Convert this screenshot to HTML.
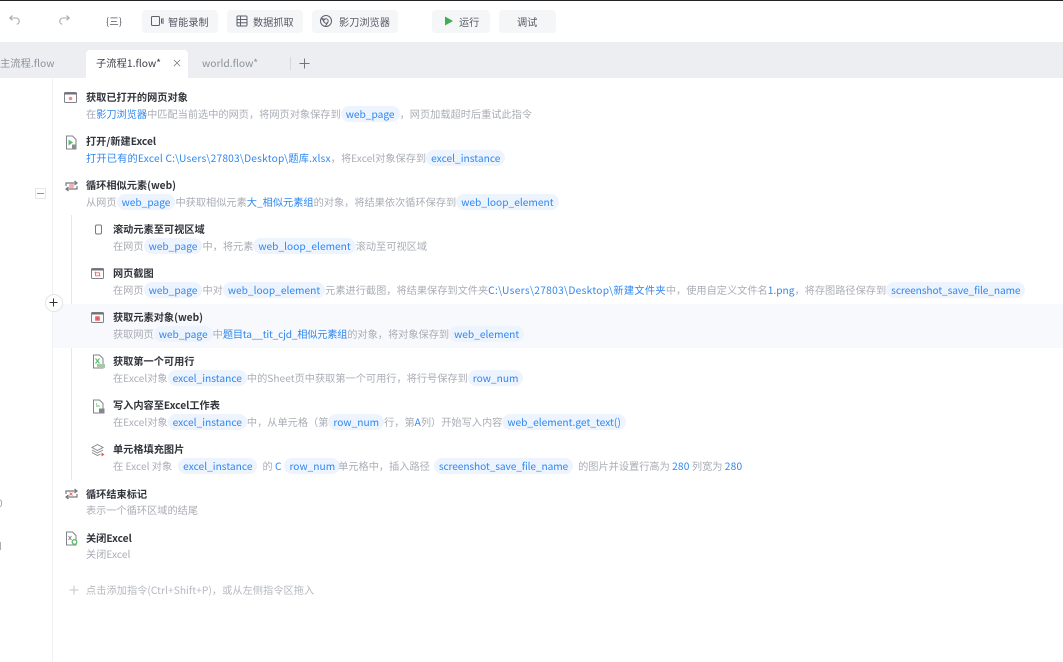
<!DOCTYPE html>
<html lang="zh"><head><meta charset="utf-8"><style>
html,body{margin:0;padding:0;background:#fff}
body{width:1063px;height:662px;overflow:hidden;position:relative;font-family:"Noto Sans CJK SC","Liberation Sans",sans-serif;color:#a9adb6;filter:blur(.3px)}
.abs{position:absolute}
.topline{left:0;top:0;width:1063px;height:1px;background:#222}
.toolbar{left:0;top:1px;width:1063px;height:41px;background:#fff}
.btn{position:absolute;top:9px;height:23px;background:#f5f6f8;border-radius:4px;font-size:10.2px;line-height:23px;color:#555a64;white-space:nowrap}
.btn span{position:absolute;top:0}
.btn svg{position:absolute;top:4px}
.tabbar{left:0;top:42px;width:1063px;height:36px;background:#eceef2}
.tab{position:absolute;top:8px;height:28px;line-height:26px;font-size:10.3px;white-space:nowrap;color:#8d929c}
.active{left:86px;width:102px;background:#fff;border-radius:4px 4px 0 0;color:#3c4048}
.t{position:absolute;font-size:10.2px;line-height:16px;font-weight:700;color:#30343b;white-space:nowrap}
.d{position:absolute;font-size:10.2px;line-height:16px;color:#a9adb6;white-space:nowrap;height:16px}
.d b{font-weight:400;color:#2f87f0}
.d b.l{letter-spacing:.2px}
.d i{font-style:normal;display:inline-block;background:#edf4fe;color:#2f87f0;border-radius:8px;padding:0 5px;line-height:16px;height:16px;font-size:10.2px;vertical-align:top}
.d i.s{letter-spacing:-.12px}
.i{position:absolute}
</style></head><body>
<div class="abs topline"></div>
<div class="abs toolbar">
<svg class="abs" style="left:8px;top:12px" width="14" height="14" viewBox="0 0 14 14" fill="none" stroke="#a3a8b0" stroke-width="1.100"><path d="M4.500 2.500 1.800 5 4.500 7.300M2 5h6a3.200 3.200 0 0 1 .8 6.300"/></svg>
<svg class="abs" style="left:57px;top:12px" width="14" height="14" viewBox="0 0 14 14" fill="none" stroke="#a3a8b0" stroke-width="1.100"><path d="M9.500 2.500 12.200 5 9.500 7.300M12 5H6a3.200 3.200 0 0 0-.8 6.300"/></svg>
<div class="abs" style="left:106px;top:12px;font-size:9.500px;line-height:16px;color:#555a64;white-space:nowrap">{三}</div>
<div class="btn" style="left:142px;width:76px"><svg style="left:8px" width="14" height="14" viewBox="0 0 14 14" fill="none" stroke="#5c616b" stroke-width="1"><rect x="1.500" y="2.500" width="8" height="9" rx="1"/><path d="M11.500 4.500v5M13 4v6"/></svg><span style="left:26px">智能录制</span></div>
<div class="btn" style="left:227px;width:76px"><svg style="left:8px" width="14" height="14" viewBox="0 0 14 14" fill="none" stroke="#5c616b" stroke-width="1"><rect x="2" y="2" width="10" height="10" rx="1"/><path d="M2 5.500h10M2 8.800h10M5.500 2v10"/></svg><span style="left:26px">数据抓取</span></div>
<div class="btn" style="left:312px;width:86px"><svg style="left:7px" width="14" height="14" viewBox="0 0 14 14" fill="none" stroke="#5c616b" stroke-width="1"><circle cx="7" cy="7" r="5.500"/><circle cx="7" cy="7" r="2.200"/><path d="M2 5h5M9 8l-2.500 4M5 8 3 4"/></svg><span style="left:27px">影刀浏览器</span></div>
<div class="btn" style="left:432px;width:58px"><svg style="left:10px" width="14" height="14" viewBox="0 0 14 14"><path d="M3 2.500 11 7 3 11.500Z" fill="#3fae4f"/></svg><span style="left:27px">运行</span></div>
<div class="btn" style="left:499px;width:57px"><span style="left:18px">调试</span></div>
</div>
<div class="abs tabbar">
<div class="tab" style="left:0">主流程.flow</div>
<div class="tab active"><span style="position:absolute;left:10px">子流程1.flow*</span><svg style="position:absolute;left:87px;top:9px" width="8" height="8" viewBox="0 0 9 9" stroke="#777" stroke-width=".9"><path d="M1 1l7 7M8 1 1 8"/></svg></div>
<div class="tab" style="left:202px">world.flow*</div>
<div class="abs" style="left:290px;top:15px;width:1px;height:13px;background:#d5d7dc"></div>
<svg class="abs" style="left:298px;top:15px" width="13" height="13" viewBox="0 0 13 13" stroke="#71767f" stroke-width="1"><path d="M6.500 1.500v10M1.500 6.500h10"/></svg>
</div>

<div class="abs" style="left:52px;top:78px;width:1px;height:584px;background:#f0f1f4"></div>
<div class="abs" style="left:71px;top:215px;width:1px;height:265px;background:#e6e8ec"></div>
<div class="abs" style="left:53px;top:304px;width:1010px;height:44px;background:#f7f9fc"></div>
<div class="abs" style="left:35px;top:188px;width:9px;height:9px;border:1px solid #e4e5e9;border-radius:1px"></div>
<div class="abs" style="left:37px;top:193px;width:7px;height:1px;background:#8f939b"></div>
<div class="abs" style="left:45px;top:294px;width:16px;height:16px;border:1px solid #e3e4e8;border-radius:50%;background:#fff"></div>
<svg class="abs" style="left:48px;top:297px" width="11" height="11" viewBox="0 0 11 11" stroke="#333" stroke-width="1"><path d="M5.500 1.500v8M1.500 5.500h8"/></svg>
<div class="abs" style="left:-3px;top:496px;font-size:10px;line-height:14px;color:#9a9ea6">0</div>
<div class="abs" style="left:0;top:542px;width:1px;height:8px;background:#a9adb6"></div>

<svg class="i" style="left:64px;top:91px" width="14" height="13" viewBox="0 0 14 13" fill="none"><rect x=".5" y="1.500" width="12" height="10" rx="1" stroke="#808389"/><rect x=".5" y="1.500" width="12" height="2" fill="#707379"/><circle cx="6.500" cy="7.500" r="1.800" fill="#f08a8c"/></svg>
<div class="t" style="left:86px;top:89px">获取已打开的网页对象</div>
<div class="d" style="left:86px;top:106px">在<b>影刀浏览器</b>中匹配当前选中的网页，将网页对象保存到<i>web_page</i>，网页加载超时后重试此指令</div>

<svg class="i" style="left:65px;top:135px" width="13" height="15" viewBox="0 0 13 15" fill="none"><path d="M1.500 1h6l3.500 3.500V14h-9.500Z" stroke="#808389"/><path d="M3.500 4.500 8 7.500 3.500 10.500Z" fill="#55bf63"/><rect x="7" y="9.500" width="4.500" height="4.500" fill="#8a8d93"/></svg>
<div class="t" style="left:86px;top:133px">打开/新建Excel</div>
<div class="d" style="left:86px;top:150px"><b class="l">打开已有的Excel C:\Users\27803\Desktop\题库.xlsx</b>，将Excel对象保存到<i>excel_instance</i></div>

<svg class="i" style="left:64px;top:179px" width="15" height="14" viewBox="0 0 15 14" fill="none" stroke="#77797f" stroke-width="1.200"><path d="M2 7V4h10M10.500 2 13 4l-2.500 2M13 7v3H3M4.500 8 2 10l2.500 2"/><circle cx="7.500" cy="7" r="2.600" fill="#f3b0b0" stroke="none"/></svg>
<div class="t" style="left:86px;top:177px">循环相似元素(web)</div>
<div class="d" style="left:86px;top:194px">从网页<i>web_page</i>中获取相似元素<b>大_相似元素组</b>的对象，将结果依次循环保存到<i>web_loop_element</i></div>

<svg class="i" style="left:93px;top:223px" width="12" height="13" viewBox="0 0 12 13" fill="none"><rect x="2.500" y="2" width="6" height="9" rx="1.500" stroke="#777"/></svg>
<div class="t" style="left:113px;top:221px">滚动元素至可视区域</div>
<div class="d" style="left:113px;top:238px">在网页<i>web_page</i>中，将元素<i>web_loop_element</i>滚动至可视区域</div>

<svg class="i" style="left:91px;top:267px" width="14" height="13" viewBox="0 0 14 13" fill="none"><rect x=".5" y="1.500" width="12" height="10" rx="1" stroke="#808389"/><rect x=".5" y="1.500" width="12" height="2" fill="#707379"/><path d="M3.500 5.800h5v3.500M4.500 4.800v4h5" stroke="#ea6a6d" stroke-width=".9"/></svg>
<div class="t" style="left:113px;top:265px">网页截图</div>
<div class="d" style="left:113px;top:282px">在网页<i>web_page</i>中对<i>web_loop_element</i>元素进行截图，将结果保存到文件夹<b style="letter-spacing:.3px">C:\Users\27803\Desktop\新建文件夹</b>中，使用自定义文件名<b>1.png</b>，将存图路径保存到<i class="s">screenshot_save_file_name</i></div>

<svg class="i" style="left:91px;top:311px" width="14" height="13" viewBox="0 0 14 13" fill="none"><rect x=".5" y="1.500" width="12" height="10" rx="1" stroke="#808389"/><rect x=".5" y="1.500" width="12" height="2" fill="#707379"/><rect x="4.200" y="5.300" width="4.600" height="4.400" fill="#ea5f63"/></svg>
<div class="t" style="left:113px;top:309px">获取元素对象(web)</div>
<div class="d" style="left:113px;top:326px">获取网页<i>web_page</i>中<b style="letter-spacing:-.2px">题目ta__tit_cjd_相似元素组</b>的对象，将对象保存到<i>web_element</i></div>

<svg class="i" style="left:92px;top:354px" width="14" height="15" viewBox="0 0 14 15" fill="none"><path d="M1.500 1h6l3.500 3.500V14h-9.500Z" stroke="#808389"/><path d="M3.500 4.500 7.500 9.500M7.500 4.500 3.500 9.500" stroke="#55bf63" stroke-width="1.100"/><rect x="5" y="10" width="8" height="4" fill="#a8c6a8"/></svg>
<div class="t" style="left:113px;top:353px">获取第一个可用行</div>
<div class="d" style="left:113px;top:370px">在Excel对象<i>excel_instance</i>中的Sheet页中获取第一个可用行，将行号保存到<i>row_num</i></div>

<svg class="i" style="left:92px;top:399px" width="14" height="15" viewBox="0 0 14 15" fill="none"><path d="M1.500 1h6l3.500 3.500V14h-9.500Z" stroke="#808389"/><path d="M4 7h3.500M4 5.500l1-1" stroke="#55bf63"/><rect x="7" y="9.500" width="5.500" height="5" fill="#85888e"/></svg>
<div class="t" style="left:113px;top:397px">写入内容至Excel工作表</div>
<div class="d" style="left:113px;top:414px">在Excel对象<i>excel_instance</i>中，从单元格（第<i>row_num</i>行，第<b>A</b>列）开始写入内容<i>web_element.get_text()</i></div>

<svg class="i" style="left:90px;top:443px" width="16" height="15" viewBox="0 0 16 15" fill="none" stroke="#808389" stroke-width=".9"><path d="M7.500 1.500 13 4.500 7.500 7.500 2 4.500Z"/><path d="M2 7l5.500 3L13 7M2 9.500l5.500 3 3-1.500"/><path d="M11.500 9.500l3 2-3 2Z" fill="#e9565a" stroke="none"/></svg>
<div class="t" style="left:113px;top:441px">单元格填充图片</div>
<div class="d" style="left:113px;top:458px">在 Excel 对象<i style="margin:0 5px 0 6px">excel_instance</i>的 <b>C</b><i style="margin:0 -2px 0 3px">row_num</i>单元格中，插入路径<i class="s" style="margin:0 5px 0 4px">screenshot_save_file_name</i>的图片并设置行高为 <b class="l">280</b> 列宽为 <b class="l">280</b></div>

<svg class="i" style="left:64px;top:487px" width="15" height="14" viewBox="0 0 15 14" fill="none" stroke="#77797f" stroke-width="1.200"><path d="M2 7V4h10M10.500 2 13 4l-2.500 2M13 7v3H3M4.500 8 2 10l2.500 2"/><path d="M5.500 5.500l3 3M8.500 5.500l-3 3" stroke="#ea6a6d" stroke-width=".9"/></svg>
<div class="t" style="left:86px;top:486px">循环结束标记</div>
<div class="d" style="left:86px;top:502px">表示一个循环区域的结尾</div>

<svg class="i" style="left:65px;top:531px" width="14" height="15" viewBox="0 0 14 15" fill="none"><path d="M1.500 1h6l3.500 3.500V14h-9.500Z" stroke="#808389"/><path d="M3.500 5 6.500 9M6.500 5l-3 4" stroke="#77797f" stroke-width=".8"/><circle cx="9.500" cy="11" r="2.300" fill="#fff" stroke="#55bf63" stroke-width="1.300"/></svg>
<div class="t" style="left:86px;top:530px">关闭Excel</div>
<div class="d" style="left:86px;top:546px">关闭Excel</div>

<svg class="i" style="left:68px;top:584px" width="12" height="12" viewBox="0 0 12 12" stroke="#c3c6cc" stroke-width="1"><path d="M6 1.500v9M1.500 6h9"/></svg>
<div class="d" style="left:86px;top:582px;color:#b4b8bf;letter-spacing:.05px">点击添加指令(Ctrl+Shift+P)，或从左侧指令区拖入</div>
</body></html>
